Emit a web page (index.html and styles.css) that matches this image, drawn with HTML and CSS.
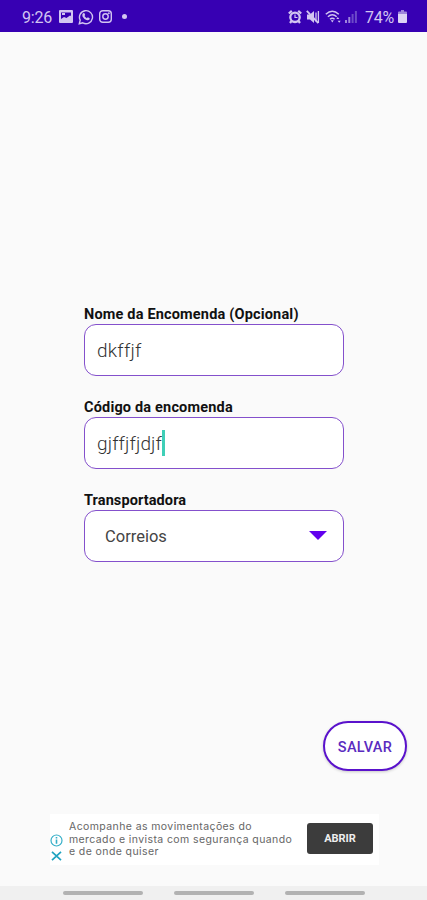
FILE: index.html
```
<!DOCTYPE html>
<html lang="pt-BR">
<head>
	<meta charset="UTF-8">
	<meta name="viewport" content="width=device-width, initial-scale=1.0">
	<title>Encomendas</title>
	<link rel="stylesheet" href="styles.css">
</head>
<body>
	<header class="status">
		<div class="status-left">
			<span class="clock">9:26</span>
			<svg class="ic-img" width="14" height="13" viewBox="0 0 14 13"><path fill="#d2c5f1" fill-rule="evenodd" d="M1 0h12q1 0 1 1v11q0 1-1 1H1q-1 0-1-1V1q0-1 1-1zM2 2.500V9l3-2 2.500 1L11 5.500l1 .5V2.500z"/><path fill="#d2c5f1" d="M3 3h3v2H3z"/></svg>
			<svg class="ic-wpp" width="16" height="16" viewBox="0 0 16 16"><path fill="none" stroke="#d2c5f1" stroke-width="1.400" d="M1.300 14.700l.9-3.600a6.500 6.500 0 1 1 2.600 2.700z"/><path fill="#d2c5f1" d="M5 4.300l1.300-.2.900 2-.7.900q.9 1.600 2.400 2.200l.9-.9 1.900 1-.2 1.300q-1.200 1.300-3.100.4-2.600-1.100-3.900-3.600Q3.900 5.500 5 4.300z"/></svg>
			<svg class="ic-insta" width="13" height="13" viewBox="0 0 13 13"><g fill="none" stroke="#d2c5f1" stroke-width="1.400"><rect x=".7" y=".7" width="11.600" height="11.600" rx="3"/><circle cx="6.500" cy="6.500" r="2.700"/></g><circle cx="9.900" cy="3.200" r=".9" fill="#d2c5f1"/></svg>
			<i class="dot"></i>
		</div>
		<div class="status-right">
			<svg width="14" height="14" viewBox="0 0 14 14"><path stroke="#d2c5f1" stroke-width="2.200" d="M.8 3.500l3-2.600M13.200 3.500l-3-2.600M3.500 11L2 13M10.500 11l1.500 2"/><circle cx="7" cy="7.300" r="4.700" fill="none" stroke="#d2c5f1" stroke-width="2.300"/><path fill="none" stroke="#d2c5f1" stroke-width="1.200" d="M7 4.500v3h2.500"/></svg>
			<svg class="ic-mute" width="14" height="14" viewBox="0 0 14 14"><path fill="#d2c5f1" d="M1 4.500h3L8 1v12L4 9.500H1z"/><path fill="none" stroke="#d2c5f1" stroke-width="1.300" d="M10 2.500v9M12.400 1v12"/><path stroke="#d2c5f1" stroke-width="1.800" d="M.8.8l11.500 12.400"/></svg>
			<svg class="ic-wifi" width="17" height="14" viewBox="0 0 17 14"><g fill="none" stroke="#d2c5f1" stroke-width="1.500"><path d="M.8 4.300q6.500-6 13 0M2.900 6.800q4.400-4 8.800 0M5 9.200q2.300-2 4.600 0"/></g><path fill="#d2c5f1" d="M5.800 10.300h3L7.300 12.500zM11.300 9l1.500-2 1.500 2zM12.700 10.800h3l-1.500 2z"/></svg>
			<svg class="ic-signal" width="12" height="12" viewBox="0 0 12 12"><path fill="#9f85dc" d="M0 9h2v3H0zM3.300 6h2v6h-2z"/><path fill="#6c49c8" d="M6.600 3h2v9h-2zM9.900 0h2v12h-2z"/></svg>
			<span class="percent">74%</span>
			<svg class="ic-bat" width="9" height="13" viewBox="0 0 9 13"><path fill="#9f85dc" d="M3 0h3v1.500h2q1 0 1 1V5H0V2.500q0-1 1-1h2z"/><path fill="#ddd3f5" d="M0 4h9v8q0 1-1 1H1q-1 0-1-1z"/></svg>
		</div>
	</header>
	<main class="content">
		<form class="form">
			<label class="label l1">Nome da Encomenda (Opcional)</label>
			<div class="field"><span class="v1">dkffjf</span></div>
			<label class="label l2">Código da encomenda</label>
			<div class="field"><span class="v2">gjffjfjdjf</span><i class="caret"></i></div>
			<label class="label l3">Transportadora</label>
			<div class="field select"><span class="v3">Correios</span><i class="arrow"></i></div>
		</form>
		<button class="save" type="button"><span>SALVAR</span></button>
		<section class="ad">
			<div class="ad-icons">
				<svg width="13" height="13" viewBox="0 0 13 13"><circle cx="6.500" cy="6.500" r="5.500" fill="none" stroke="#36afc8" stroke-width="1.200"/><path stroke="#36afc8" stroke-width="1.600" d="M6.500 5.500v4.300M6.500 3v1.500"/></svg>
				<svg width="11" height="10" viewBox="0 0 11 10"><path stroke="#1fa3c0" stroke-width="1.700" d="M1 .8l9 8.400M10 .8L1 9.200"/></svg>
			</div>
			<p class="ad-text"><span class="a1">Acompanhe as movimentações do</span><span class="a2">mercado e invista com segurança quando</span><span class="a3">e de onde quiser</span></p>
			<div class="open"><span>ABRIR</span></div>
		</section>
	</main>
	<footer class="nav"><i></i><i></i><i></i></footer>
</body>
</html>
```
FILE: styles.css
```
*{
	margin: 0;
	padding: 0;
	box-sizing: border-box;
}
body{
	height: 900px;
	display: flex;
	flex-direction: column;
	background: #fafafa;
	font-family: Roboto, "Liberation Sans", sans-serif;
	overflow: hidden;
}
svg{
	display: block;
	flex: none;
}
.status{
	height: 32px;
	padding: 1px 20px 0 22px;
	display: flex;
	justify-content: space-between;
	background: #3700b3;
	color: #d2c5f1;
}
.status-left,
.status-right{
	display: flex;
	align-items: center;
}
.clock{
	width: 37px;
	padding-top: 1px;
	font-size: 16px;
	letter-spacing: -0.2px;
}
.ic-wpp{
	margin-left: 5px;
}
.ic-insta{
	margin-left: 5px;
}
.dot{
	width: 5px;
	height: 5px;
	margin-left: 10px;
	border-radius: 50%;
	background: #d2c5f1;
}
.ic-mute{
	margin-left: 4px;
}
.ic-wifi{
	margin-left: 5px;
}
.ic-signal{
	margin-left: 3px;
}
.percent{
	margin-left: 8px;
	padding-top: 1px;
	width: 33px;
	font-size: 16px;
	letter-spacing: -0.3px;
}
.content{
	flex: 1;
	display: flex;
	flex-direction: column;
}
.form{
	width: 260px;
	margin: 275px 0 0 84px;
}
.label{
	display: block;
	height: 17px;
	line-height: 15px;
	font-size: 14.500px;
	font-weight: bold;
	letter-spacing: 0.18px;
	color: #111;
	white-space: nowrap;
}
.l3{
	letter-spacing: 0.1px;
}
.field{
	display: flex;
	align-items: center;
	height: 52px;
	margin-bottom: 24px;
	padding-left: 12px;
	border: 1px solid #8450cc;
	border-radius: 12px;
	background: #fff;
	font-size: 19px;
	color: #333;
}
.v1,
.v2{
	font-weight: 300;
}
.v1{
	letter-spacing: 0.25px;
}
.v2{
	letter-spacing: 0.13px;
}
.caret{
	width: 3px;
	height: 26px;
	background: #3fcfb7;
}
.select{
	justify-content: space-between;
	padding: 1px 16px 0 20px;
	margin-bottom: 0;
	font-size: 16.500px;
	color: #444;
}
.arrow{
	border: 9px solid transparent;
	border-top: 9px solid #6200ee;
	border-bottom: 0;
	margin-top: -3px;
}
.save{
	align-self: flex-end;
	width: 84px;
	height: 50px;
	margin: 159px 20px 0 0;
	padding-top: 2px;
	border: 2px solid #5a12cc;
	border-radius: 25px;
	background: #fff;
	box-shadow: 0 1px 3px rgba(0,0,0,0.2);
	font: 500 14.500px Roboto, sans-serif;
	letter-spacing: 0.3px;
	color: #5a2bbf;
}
.ad{
	display: flex;
	width: 329px;
	height: 51px;
	margin: 43px 0 0 50px;
	background: #fff;
}
.ad-icons{
	display: flex;
	flex-direction: column;
	align-items: center;
	gap: 4px;
	width: 13px;
	padding-top: 20px;
}
.ad-text{
	width: 239px;
	padding: 7px 0 0 6px;
	font-family: Inter, sans-serif;
	font-size: 10.500px;
	line-height: 12.500px;
	letter-spacing: 0.4px;
	color: #666;
	white-space: nowrap;
}
.ad-text span{
	display: block;
}
.open{
	display: flex;
	align-items: center;
	justify-content: center;
	width: 66px;
	height: 31px;
	margin: 9px 0 0 5px;
	border-radius: 3px;
	background: #3c3c3c;
	font-size: 11px;
	font-weight: bold;
	color: #eee;
}
.nav{
	display: flex;
	gap: 31px;
	height: 14px;
	padding: 5px 0 0 63px;
	background: #f0f0f0;
}
.nav i{
	width: 80px;
	height: 4px;
	border-radius: 2px;
	background: #b2b2b2;
}
```
